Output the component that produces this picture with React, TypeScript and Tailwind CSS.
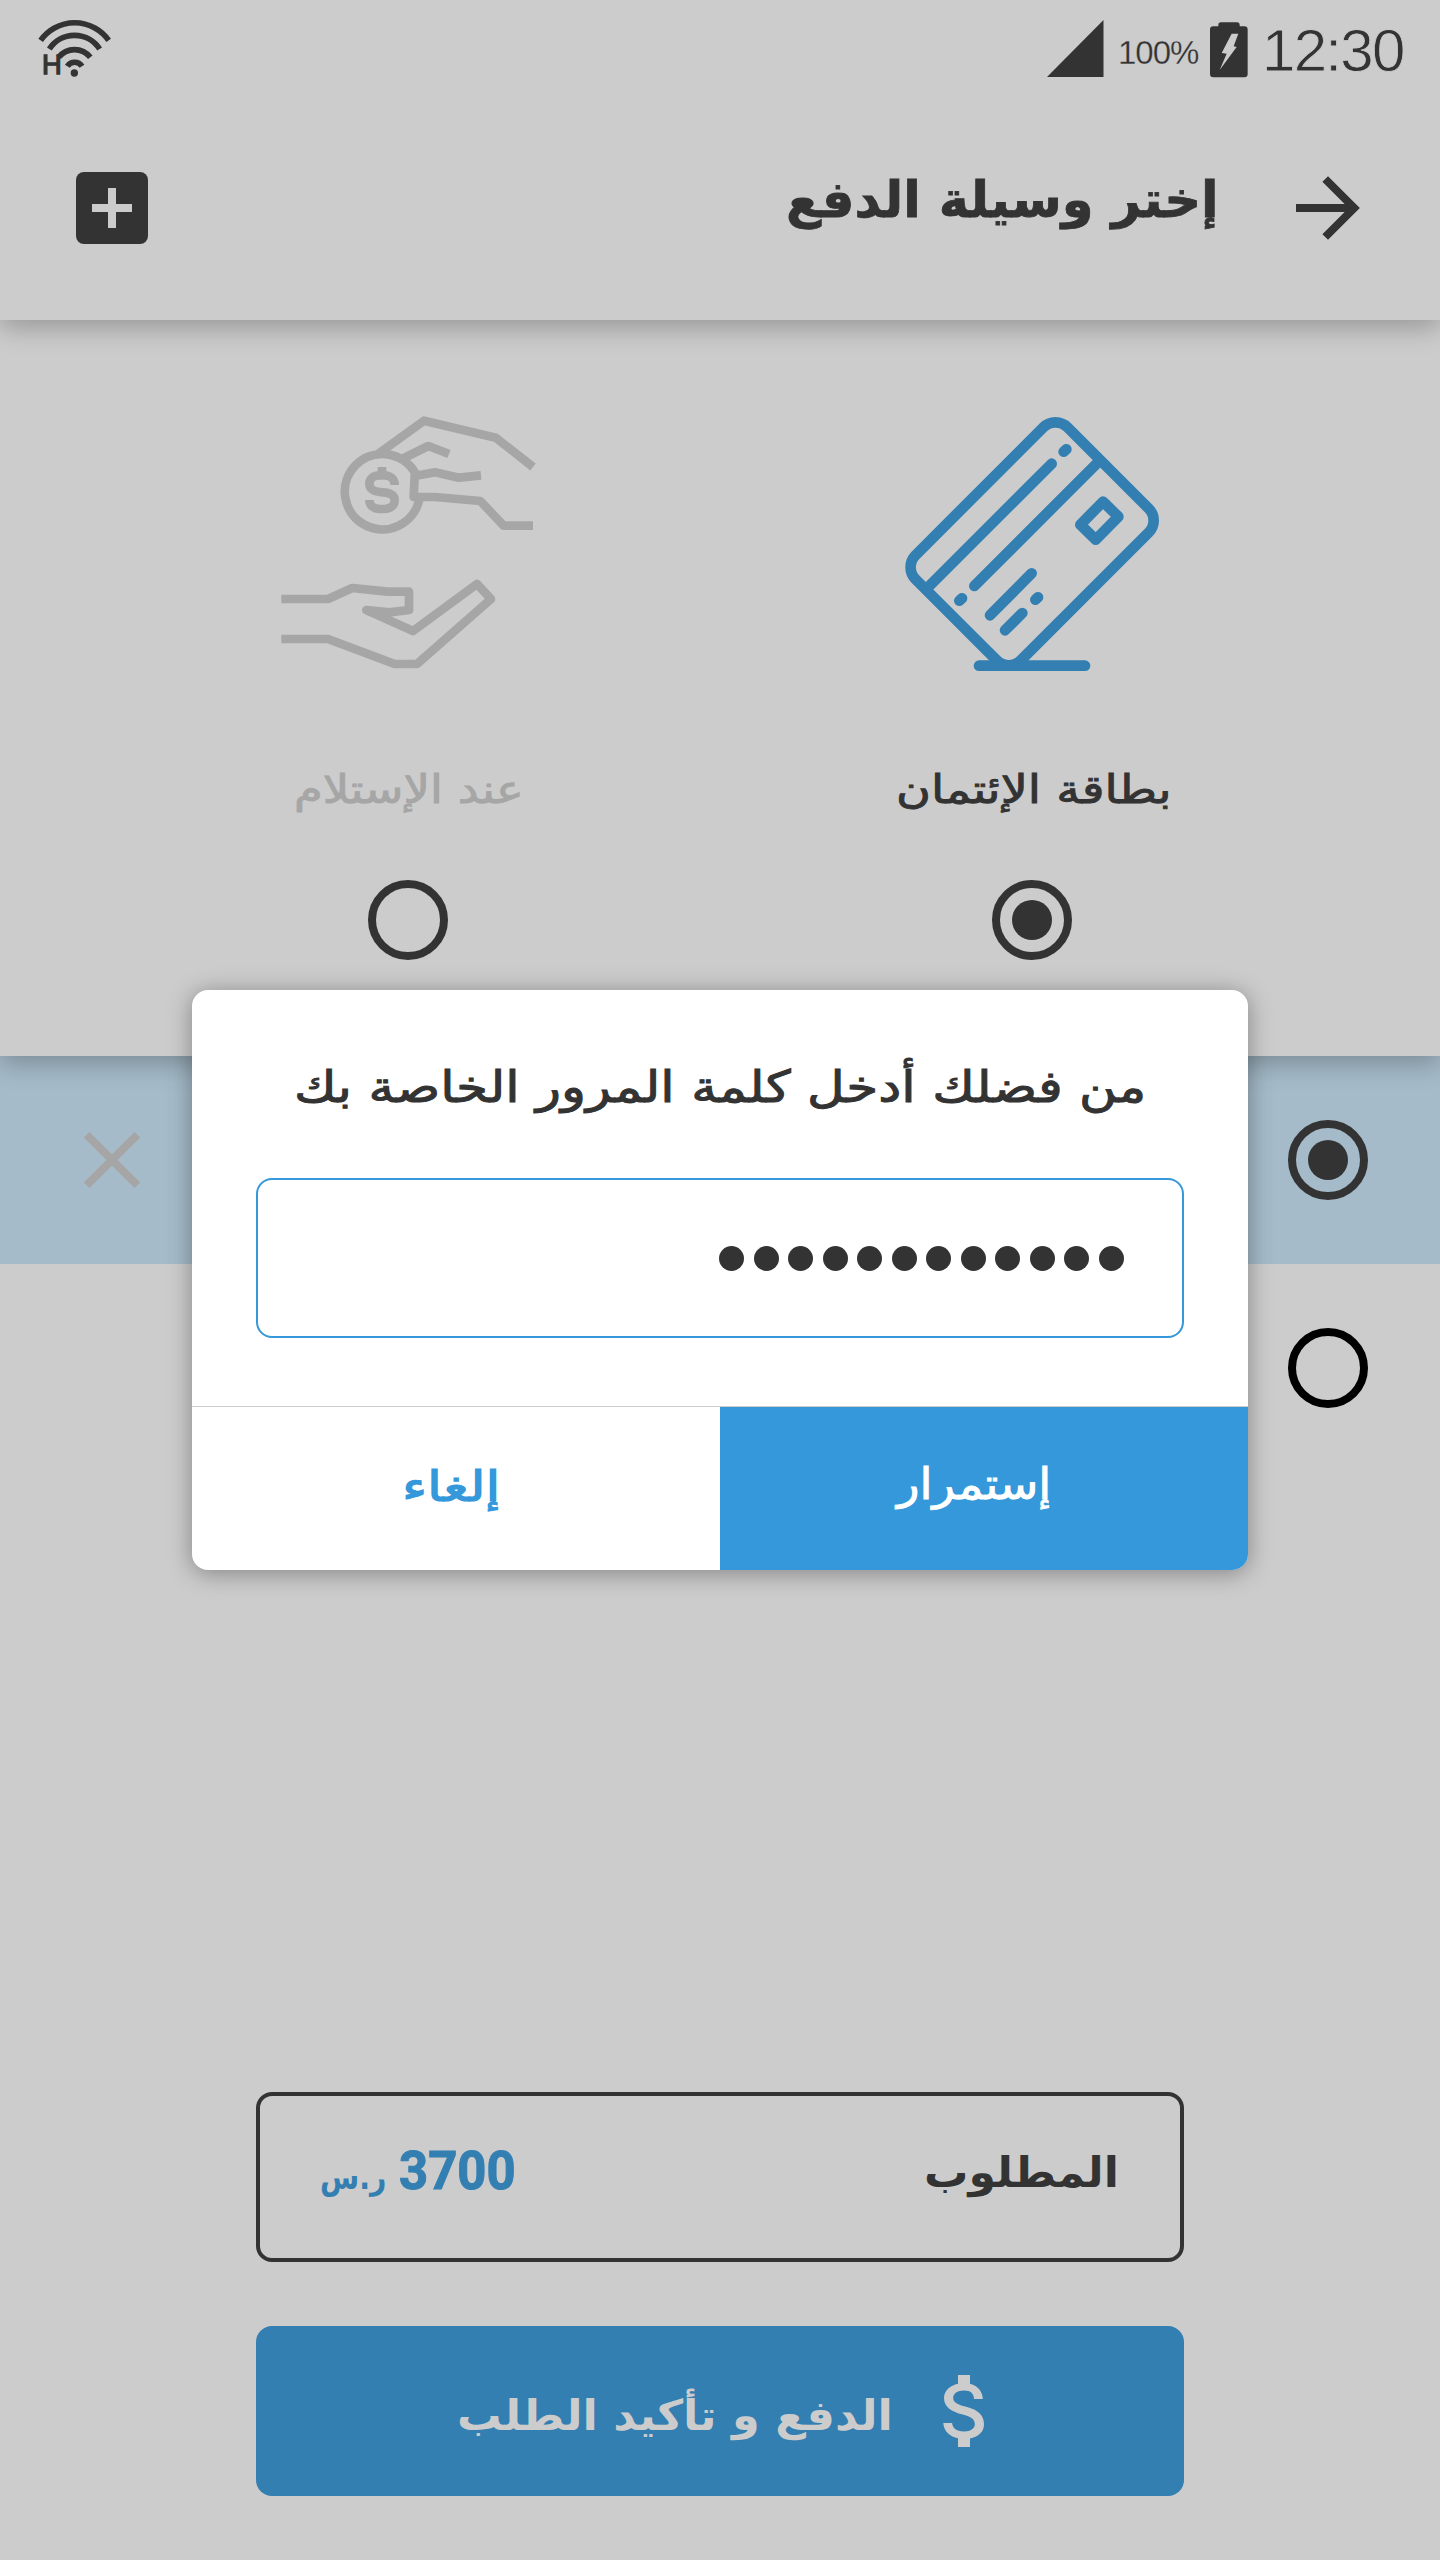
import { useLayoutEffect, useRef } from "react";
import type { ReactNode } from "react";

/* One line of right-to-left text stretched to the width of its box. */
function Line({ className, children }: { className: string; children: ReactNode }) {
  const box = useRef<HTMLDivElement>(null);
  const ink = useRef<HTMLSpanElement>(null);
  useLayoutEffect(() => {
    if (box.current && ink.current) {
      const ratio = box.current.clientWidth / ink.current.offsetWidth;
      ink.current.style.transform = `scaleX(${ratio})`;
    }
  }, []);
  return (
    <div ref={box} dir="rtl" className={`shrink-0 whitespace-nowrap leading-none ${className}`}>
      <span ref={ink} className="inline-block origin-right">
        {children}
      </span>
    </div>
  );
}

function Radio({ checked = false, className = "border-[#333]" }: { checked?: boolean; className?: string }) {
  return (
    <div className={`flex size-20 items-center justify-center rounded-full border-8 ${className}`}>
      {checked && <div className="size-10 rounded-full bg-[#333]" />}
    </div>
  );
}

function WifiIcon() {
  return (
    <svg className="h-[72px] w-[76px]" viewBox="112 54 228 216" fill="none" stroke="#333" strokeWidth="17">
      <path d="M123 121A125 125 0 0 1 327 121" />
      <path d="M149 147A90 90 0 0 1 300 147" />
      <path d="M177 172A60 60 0 0 1 272 172" />
      <path d="M203 199A26 26 0 0 1 247 199" />
      <circle cx="224" cy="219" r="11" fill="#333" stroke="none" />
      <text x="127" y="223" fontSize="82" fill="#333" strokeWidth="4" fontFamily="Liberation Sans, sans-serif">
        H
      </text>
    </svg>
  );
}

function BatteryIcon() {
  return (
    <svg className="h-[56px] w-[38px]" viewBox="751 65 114 168">
      <path
        d="M776 78V74Q776 66 784 66H832Q840 66 840 74V78H854Q864 78 864 88V221Q864 231 854 231H761Q751 231 751 221V88Q751 78 761 78Z"
        fill="#333"
      />
      <path d="M816 100H836L822 138L831 140L780 209L801 160L786 158Z" fill="#ccc" />
    </svg>
  );
}

function CashIcon() {
  return (
    <svg
      className="size-[300px]"
      viewBox="0 0 900 900"
      fill="none"
      stroke="#a6a6a6"
      strokeWidth="26"
      strokeLinejoin="round"
    >
      <path d="M355 191L492 92L707 143L819 231" />
      <path d="M426 207L505 168L567 192" />
      <path d="M466 250A113 113 0 1 0 478 328" />
      <path d="M663 256L597 263L525 247L464 258L461 321H525L661 333L731 407H819" />
      <path d="M366 231V258" />
      <path d="M404 285C404 268 391 256 373 256H359C341 256 328 266 328 281C328 296 340 304 358 306L378 308C394 310 404 318 404 331C404 346 391 357 373 357H360C341 357 328 346 328 330" />
      <path d="M64 627H204L277 594L382 605H447V660L388 667L319 660L459 723L651 582L693 627L471 822H404L204 747H64" />
    </svg>
  );
}

function CardIcon() {
  return (
    <svg
      className="size-[300px]"
      viewBox="0 0 900 900"
      fill="none"
      stroke="#337fb2"
      strokeWidth="32"
      strokeLinecap="round"
      strokeLinejoin="round"
    >
      <rect x="-322" y="-223" width="644.5" height="446.5" rx="51" transform="translate(456 461.5) rotate(-45)" />
      <path d="M148 588L515 221M283 588L655 216" />
      <path d="M551 185L559 178M238 632L246 625M466 629L474 622" />
      <path d="M330 676L455 550M375 721L427 669" />
      <path d="M669 335L715 380L647 449L601 404Z" />
      <path d="M297 827H615" />
    </svg>
  );
}

function Header() {
  return (
    <header className="relative z-10 h-80 bg-[#ccc] shadow-[0_8px_24px_rgba(0,0,0,0.25)]">
      <div className="flex h-24 items-start pl-[37px] pr-[33px] pt-[18px] text-[#333]">
        <WifiIcon />
        <svg className="ml-auto mt-[2px] h-[57px] w-[57px]" viewBox="0 0 57 57">
          <path d="M0 57L56.500 0V57Z" fill="#333" />
        </svg>
        <span className="ml-[14px] mt-[17px] w-[89px] font-['Liberation_Sans',sans-serif] text-[33px] leading-[36px] tracking-[-1px] [-webkit-text-stroke:0.3px_#ccc]">
          100%
        </span>
        <div className="ml-[3px] mt-[4px]">
          <BatteryIcon />
        </div>
        <span className="ml-[14px] mt-[0px] w-[145px] whitespace-nowrap font-['Liberation_Sans',sans-serif] text-[60px] leading-[66px] tracking-[-1.7px] [-webkit-text-stroke:0.8px_#ccc]">
          12:30
        </span>
      </div>
      <div className="flex items-start pl-[76px]">
        <svg className="mt-[76px] size-[72px]" viewBox="0 0 72 72">
          <rect width="72" height="72" rx="8" fill="#333" />
          <path d="M36 16V56M16 36H56" stroke="#ccc" strokeWidth="8" />
        </svg>
        <Line className="ml-[638px] mt-[79px] w-[433px] text-[50px] font-bold text-[#333] [-webkit-text-stroke:0.8px_#333]">
          إختر وسيلة الدفع
        </Line>
        <svg className="ml-[77px] mt-[80px] h-16 w-16" viewBox="0 0 64 64" fill="none" stroke="#333" strokeWidth="8">
          <path d="M0 32H58M29.200 3L58.200 32L29.200 61" />
        </svg>
      </div>
    </header>
  );
}

function Methods() {
  return (
    <section className="relative z-[5] grid h-[736px] grid-cols-2 bg-[#ccc] px-24 shadow-[0_8px_24px_rgba(0,0,0,0.25)]">
      <div className="pt-[70px]">
        <div className="pl-[164px]">
          <CashIcon />
        </div>
        <Line className="ml-[198px] mt-[80px] h-[38px] w-[230px] text-[39px] text-[#a6a6a6] [-webkit-text-stroke:0.9px_#a6a6a6]">
          عند الإستلام
        </Line>
        <div className="mt-[72px] flex justify-center">
          <Radio />
        </div>
      </div>
      <div className="pt-[70px]">
        <div className="pl-[160px]">
          <CardIcon />
        </div>
        <Line className="ml-[176px] mt-[80px] h-[38px] w-[275px] text-[39px] text-[#333] [-webkit-text-stroke:0.9px_#333]">
          بطاقة الإئتمان
        </Line>
        <div className="mt-[72px] flex justify-center">
          <Radio checked />
        </div>
      </div>
    </section>
  );
}

function PasswordDialog() {
  return (
    <div
      role="dialog"
      className="absolute left-48 top-[990px] z-20 h-[580px] w-[1056px] rounded-2xl bg-white shadow-[0_3px_24px_rgba(0,0,0,0.36)]"
    >
      <div className="h-[417px] border-b border-[#ccc] px-16 pt-[75px]">
        <Line className="ml-[38px] h-[44px] w-[852px] text-[44px] text-[#333] [-webkit-text-stroke:1px_#333]">
          من فضلك أدخل كلمة المرور الخاصة بك
        </Line>
        <div className="mt-[69px] flex h-40 items-center justify-end gap-[9.5px] rounded-2xl border-2 border-[#3498db] pr-[58.5px] pt-[1px]">
          {Array.from({ length: 12 }, (_, i) => (
            <div key={i} className="size-[25px] rounded-full bg-[#333]" />
          ))}
        </div>
      </div>
      <div className="grid h-[163px] grid-cols-2">
        <div className="pl-[210px] pt-[59px]">
          <Line className="w-[98px] text-[42px] text-[#3498db] [-webkit-text-stroke:1.2px_#3498db]">إلغاء</Line>
        </div>
        <div className="rounded-br-2xl bg-[#3498db] pl-[177px] pt-[56px]">
          <Line className="w-[154px] text-[43px] text-white [-webkit-text-stroke:0.9px_#fff]">إستمرار</Line>
        </div>
      </div>
    </div>
  );
}

export default function App() {
  return (
    <div className="relative h-[2560px] w-[1440px] overflow-hidden bg-[#ccc] font-['DejaVu_Sans',sans-serif]">
      <Header />
      <Methods />
      <div className="flex h-52 items-center justify-between bg-[#a5bbc9] pl-[84px] pr-[72px]">
        <svg className="size-14" viewBox="0 0 56 56" stroke="#a6a6a6" strokeWidth="8">
          <path d="M2.800 2.800L53.200 53.200M53.200 2.800L2.800 53.200" />
        </svg>
        <Radio checked />
      </div>
      <div className="flex h-52 items-center justify-end pr-[72px]">
        <Radio className="border-black" />
      </div>
      <div className="mx-64 mt-[620px] flex h-[170px] items-start rounded-2xl border-4 border-[#333]">
        <Line className="ml-[60px] mt-[64px] w-[66px] text-[34px] font-bold text-[#337fb2]">ر.س</Line>
        <Line className="ml-[13px] mt-[49px] w-[117px] font-['Roboto',sans-serif] text-[53px] font-bold text-[#337fb2] [-webkit-text-stroke:1px_#337fb2]">
          3700
        </Line>
        <Line className="ml-[408px] mt-[56px] w-[195px] text-[42px] font-bold text-[#333]">المطلوب</Line>
      </div>
      <div className="mx-64 mt-16 flex h-[170px] items-start rounded-2xl bg-[#337fb2]">
        <Line className="ml-[201px] mt-[69px] w-[436px] text-[42px] font-bold text-[#ccc]">الدفع و تأكيد الطلب</Line>
        <svg className="ml-[25px] mt-[37px] size-24" viewBox="0 0 24 24" fill="#ccc">
          <path d="M11.800 10.900c-2.270-.590-3-1.200-3-2.150 0-1.090 1.010-1.850 2.700-1.850 1.780 0 2.440.850 2.500 2.100h2.210c-.070-1.720-1.120-3.300-3.210-3.810V3h-3v2.160c-1.940.420-3.500 1.680-3.500 3.610 0 2.310 1.910 3.460 4.700 4.130 2.500.600 3 1.480 3 2.410 0 .690-.490 1.790-2.700 1.790-2.060 0-2.870-.920-2.980-2.100h-2.200c.120 2.190 1.760 3.420 3.680 3.830V21h3v-2.150c1.950-.370 3.500-1.500 3.500-3.550 0-2.840-2.430-3.810-4.700-4.400z" />
        </svg>
      </div>
      <PasswordDialog />
    </div>
  );
}
